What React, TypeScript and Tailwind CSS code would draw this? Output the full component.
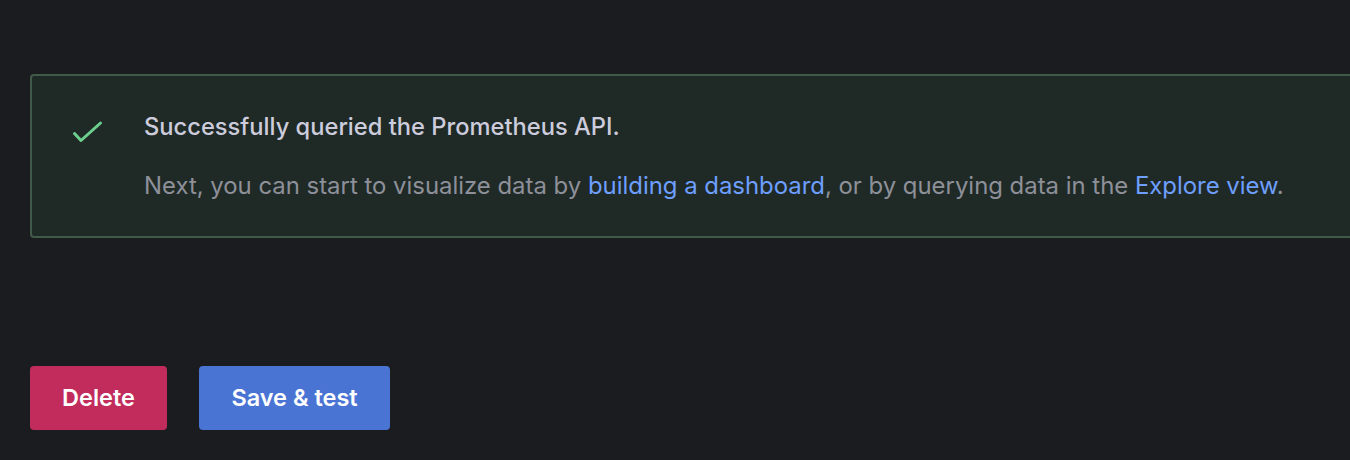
import React from 'react';

const CheckIcon: React.FC = () => (
  <svg width="32" height="32" viewBox="0 0 32 32" fill="none" className="text-[#6ccf8e]">
    <path d="M2.5 15.5L9 22.5L28.5 5" stroke="currentColor" strokeWidth="3" strokeLinecap="round" strokeLinejoin="round" />
  </svg>
);

const App: React.FC = () => {
  return (
    <div className="min-h-[460px] w-[1350px] overflow-hidden bg-[#1b1c20] pt-[74px] pl-[30px] font-['Inter',_'Liberation_Sans',_sans-serif]">
      <div className="flex w-[1360px] h-[164px] rounded-[4px] border-2 border-[#3f5a48] bg-[#1f2a27]">
        <div className="pl-[40px] pt-[42px] w-[112px] shrink-0">
          <CheckIcon />
        </div>
        <div className="pt-[37px]">
          <div className="text-[23.7px] font-medium leading-[28px] text-[#ccccdc]">
            Successfully queried the Prometheus API.
          </div>
          <div className="mt-[31px] text-[23.9px] leading-[28px] text-[#8e9099]">
            Next, you can start to visualize data by{' '}
            <a className="text-[#6e9fff]">building a dashboard</a>, or by querying data in the{' '}
            <a className="text-[#6e9fff]">Explore view</a>.
          </div>
        </div>
      </div>
      <div className="mt-[128px] flex gap-[32px]">
        <button className="h-[64px] w-[137px] rounded-[4px] bg-[#c12c5c] text-[23.5px] font-semibold text-white">
          Delete
        </button>
        <button className="h-[64px] w-[191px] rounded-[4px] bg-[#4a74d4] text-[23.5px] font-semibold text-white">
          Save &amp; test
        </button>
      </div>
    </div>
  );
};

export default App;
